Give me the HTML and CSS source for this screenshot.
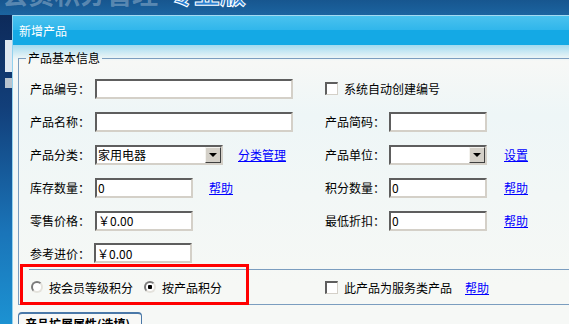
FILE: index.html
```html
<!DOCTYPE html>
<html lang="zh-CN">
<head>
    <meta charset="UTF-8">
    <title>新增产品</title>
    <link rel="stylesheet" href="styles.css">
</head>
<body>
    <div class="top">
        <span class="logo-dim">会员积分管理</span><span class="logo">专业版</span>
    </div>
    <div class="main">
        <div class="side">
            <div class="side-block"></div>
            <div class="side-bar"></div>
        </div>
        <div class="dialog">
            <div class="title">新增产品</div>
            <div class="dlg-body">
                <fieldset class="basic">
                    <legend>产品基本信息</legend>
                    <div class="grid">
                        <span class="lbl">产品编号：</span>
                        <span class="cell"><input class="txt w198" type="text"></span>
                        <label class="chk-line span3"><input class="chk" type="checkbox">系统自动创建编号</label>

                        <span class="lbl">产品名称：</span>
                        <span class="cell"><input class="txt w198" type="text"></span>
                        <span class="lbl">产品简码：</span>
                        <span class="cell"><input class="txt w98" type="text"></span>
                        <span></span>

                        <span class="lbl">产品分类：</span>
                        <span class="cell">
                            <span class="sel w128"><span class="sel-text">家用电器</span><span class="arrow"></span></span>
                            <a class="link gap15" href="#">分类管理</a>
                        </span>
                        <span class="lbl">产品单位：</span>
                        <span class="cell">
                            <span class="sel w98"><span class="sel-text"></span><span class="arrow"></span></span>
                        </span>
                        <a class="link" href="#">设置</a>

                        <span class="lbl">库存数量：</span>
                        <span class="cell">
                            <input class="txt w98" type="text" value="0">
                            <a class="link gap16" href="#">帮助</a>
                        </span>
                        <span class="lbl">积分数量：</span>
                        <span class="cell"><input class="txt w98" type="text" value="0"></span>
                        <a class="link" href="#">帮助</a>

                        <span class="lbl">零售价格：</span>
                        <span class="cell"><input class="txt w98" type="text" value="￥0.00"></span>
                        <span class="lbl">最低折扣：</span>
                        <span class="cell"><input class="txt w98" type="text" value="0"></span>
                        <a class="link" href="#">帮助</a>

                        <span class="lbl">参考进价：</span>
                        <span class="cell"><input class="txt w98 shift" type="text" value="￥0.00"></span>
                    </div>
                    <div class="opts">
                        <div class="opt-left">
                            <label class="radio-line"><input class="rad" type="radio" name="score">按会员等级积分</label>
                            <label class="radio-line"><input class="rad" type="radio" name="score" checked>按产品积分</label>
                        </div>
                        <label class="chk-line"><input class="chk" type="checkbox">此产品为服务类产品</label>
                        <a class="link gap13" href="#">帮助</a>
                    </div>
                </fieldset>
                <div class="tab">产品扩展属性(选填)</div>
            </div>
        </div>
    </div>
    <div class="mark"></div>
</body>
</html>
```

FILE: styles.css
```css
body {
    margin: 0;
    width: 569px;
    height: 324px;
    overflow: hidden;
    position: relative;
    font-family: "Noto Sans CJK SC", "Liberation Sans", sans-serif;
    font-size: 12px;
    color: #000;
    background: #1a5d98;
}
.top {
    display: flex;
    align-items: flex-start;
    height: 15px;
    overflow: hidden;
    background: linear-gradient(180deg, #17568f, #1b64a0);
    white-space: nowrap;
    padding-left: 2px;
}
.logo-dim {
    margin-top: -22px;
    font-size: 26px;
    font-weight: bold;
    line-height: 30px;
    color: rgba(255, 255, 255, 0.3);
}
.logo {
    margin-top: -22px;
    margin-left: 10px;
    font-size: 26px;
    font-weight: bold;
    line-height: 30px;
    color: #2b7fd0;
    -webkit-text-stroke: 1px #fff;
}
.main {
    display: flex;
    height: 309px;
}
.side {
    width: 12px;
    flex: none;
    background: linear-gradient(180deg, #0d2a5a 0%, #123f7a 30%, #1a74b8 70%, #1c92d2 100%);
    padding-top: 25px;
    box-sizing: border-box;
}
.side-block {
    margin-left: 5px;
    height: 32px;
    background: #dfe8f1;
}
.side-bar {
    margin: 6px 0 0 5px;
    height: 10px;
    background: #b9c4cf;
}
.dialog {
    flex: 1;
    min-width: 0;
    border-left: 1px solid #93d2ee;
    background: #f6f8f6;
}
.title {
    height: 29px;
    border-top: 1px solid #a2daf2;
    background: linear-gradient(180deg, #4ac2ee 0%, #30b6eb 48%, #14a9e5 50%, #14a9e5 100%);
    color: #fff;
    padding-left: 6px;
    line-height: 29px;
}
.dlg-body {
    background: linear-gradient(180deg, #a3daef 0px, #e6f3f6 12px, #f7f8f6 16px, #eef6f7 70px, #f2f7f6 150px, #f6f8f5 240px);
    padding: 6px 0 0 5px;
    height: 264px;
    box-sizing: border-box;
}
.basic {
    margin: 0;
    padding: 0 0 0 7px;
    border: 1px solid #7b9dbf;
    border-right: none;
    min-width: 0;
}
.basic legend {
    padding: 0 2px;
    line-height: 14px;
}
.grid {
    display: grid;
    margin: 7px 0 0 4px;
    grid-template-columns: 65px 230px 64px 115px auto;
    grid-template-rows: repeat(5, 33px) 32px;
    align-items: center;
}
.lbl {
    white-space: nowrap;
}
.cell {
    display: flex;
    align-items: center;
}
.span3 {
    grid-column: 3 / 6;
}
.txt {
    box-sizing: border-box;
    height: 20px;
    margin: 0;
    padding: 0 1px;
    font: 12px "Noto Sans CJK SC", "Liberation Sans", sans-serif;
    color: #000;
    background: #fff;
    border-style: solid;
    border-width: 2px;
    border-color: #5e5e5e #d4d0c8 #d4d0c8 #5e5e5e;
    outline: none;
}
.w198 { width: 198px; }
.w128 { width: 128px; }
.w98 { width: 98px; }
.shift { margin-left: -1px; }
.sel {
    box-sizing: border-box;
    height: 20px;
    display: flex;
    align-items: center;
    background: #fff;
    border-style: solid;
    border-width: 2px;
    border-color: #5e5e5e #d4d0c8 #d4d0c8 #5e5e5e;
}
.sel-text {
    flex: 1;
    padding-left: 1px;
}
.arrow {
    width: 16px;
    height: 16px;
    box-sizing: border-box;
    background: #d4d0c8;
    border-style: solid;
    border-width: 1px;
    border-color: #f4f3ef #404040 #404040 #f4f3ef;
    position: relative;
}
.arrow::after {
    content: "";
    position: absolute;
    left: 3px;
    top: 5px;
    border-left: 4px solid transparent;
    border-right: 4px solid transparent;
    border-top: 4px solid #000;
}
.link {
    color: #0000ff;
    text-decoration: underline;
    white-space: nowrap;
}
.gap15 { margin-left: 15px; }
.gap16 { margin-left: 16px; }
.gap13 { margin-left: 13px; }
.chk-line {
    display: flex;
    align-items: center;
    white-space: nowrap;
}
.chk {
    appearance: none;
    -webkit-appearance: none;
    box-sizing: border-box;
    width: 13px;
    height: 13px;
    margin: 0 6px 0 0;
    background: #fff;
    border-style: solid;
    border-width: 2px 1px 1px 2px;
    border-color: #5e5e5e #d4d0c8 #d4d0c8 #5e5e5e;
}
.opts {
    display: flex;
    align-items: center;
    height: 34px;
    margin-left: 3px;
    border-top: 1px solid #7b9dbf;
    padding-left: 2px;
}
.opt-left {
    width: 294px;
    display: flex;
    align-items: center;
}
.radio-line {
    display: flex;
    align-items: center;
    white-space: nowrap;
    margin-right: 11px;
}
.rad {
    appearance: none;
    -webkit-appearance: none;
    box-sizing: border-box;
    width: 12px;
    height: 12px;
    margin: 0 6px 0 0;
    border-radius: 50%;
    background: #fff;
    border: 2px solid;
    border-color: #7a7a7a #e4e2dc #e4e2dc #7a7a7a;
}
.rad:checked {
    background: radial-gradient(circle, #000 0, #000 2px, #fff 2.5px);
}
.tab {
    display: inline-block;
    margin-top: 7px;
    padding: 2px 11px 0 6px;
    border: 1px solid #4a78a8;
    border-top-width: 2px;
    border-radius: 4px 4px 0 0;
    background: #f8f8f6;
    font-weight: bold;
    line-height: 16px;
}
.mark {
    position: absolute;
    left: 20px;
    top: 264px;
    width: 229px;
    height: 41px;
    box-sizing: border-box;
    border: 3px solid #ff0000;
}
```
